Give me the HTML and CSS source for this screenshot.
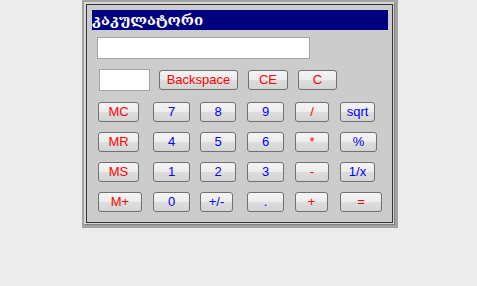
FILE: index.html
```html
<!DOCTYPE html>
<html>
<head>
	<meta charset="utf-8">
	<title>კაკულატორი</title>
	<link rel="stylesheet" href="styles.css">
</head>
<body>
<div class="frame">
<div class="shell">
<div class="panel">
	<div class="title">კაკულატორი</div>
	<input type="text" class="display" value="">
	<div class="tools">
		<input type="text" class="memory" value="">
		<button class="op w79">Backspace</button>
		<button class="op w40">CE</button>
		<button class="op w39">C</button>
	</div>
	<div class="keys">
		<button class="op w41">MC</button>
		<button class="num w37">7</button>
		<button class="num w36">8</button>
		<button class="num w37">9</button>
		<button class="op w34">/</button>
		<button class="num w35">sqrt</button>

		<button class="op w41">MR</button>
		<button class="num w37">4</button>
		<button class="num w36">5</button>
		<button class="num w37">6</button>
		<button class="op w34">*</button>
		<button class="num w37">%</button>

		<button class="op w41">MS</button>
		<button class="num w37">1</button>
		<button class="num w36">2</button>
		<button class="num w37">3</button>
		<button class="op w34">-</button>
		<button class="num w35">1/x</button>

		<button class="op w44">M+</button>
		<button class="num w37">0</button>
		<button class="num w33">+/-</button>
		<button class="num w37">.</button>
		<button class="op w33">+</button>
		<button class="op w42">=</button>
	</div>
</div>
</div>
</div>
</body>
</html>
```

FILE: styles.css
```css
body {
	margin: 0;
	background: #ececec;
	font-family: "Liberation Sans", Arial, sans-serif;
}

.frame {
	margin-left: 82px;
	width: 316px;
	box-sizing: border-box;
	background: #a3a3a3;
	padding: 2px 3px 3px 2px;
}

.shell {
	border: 1px solid;
	border-color: #d6d6d6 #808080 #808080 #d6d6d6;
	background: #d6d6d6;
	padding: 1px;
}

.panel {
	border: 1px solid #333;
	background: #cccccc;
	padding: 5px 3px 10px 5px;
}

.title {
	width: 296px;
	height: 20px;
	background: #000080;
	color: #fff;
	font: bold 15px/20px "DejaVu Serif", serif;
	white-space: nowrap;
}

.display {
	display: block;
	margin: 7px 0 0 5px;
	width: 213px;
	height: 22px;
	box-sizing: border-box;
	border: 1px solid #a5a5a5;
	background: #fff;
	padding: 0;
}

.tools {
	display: flex;
	align-items: center;
	gap: 9px;
	margin-top: 10px;
	padding-left: 7px;
	height: 22px;
}

.memory {
	width: 51px;
	height: 22px;
	box-sizing: border-box;
	border: 1px solid #a5a5a5;
	background: #fff;
	padding: 0;
}

.tools .w40, .tools .w39 {
	margin-left: 1px;
}

.keys {
	display: grid;
	grid-template-columns: 55px 47px 47px 48px 45px 1fr;
	grid-auto-rows: 20px;
	row-gap: 10px;
	justify-items: start;
	margin-top: 11px;
	padding-left: 6px;
}

button {
	height: 20px;
	box-sizing: border-box;
	padding: 0;
	border: 1px solid #707070;
	border-radius: 3px;
	background: linear-gradient(#f4f4f4 0, #ececec 50%, #dddddd 50%, #d4d4d4 100%);
	font: 13px/18px "Liberation Sans", Arial, sans-serif;
	text-align: center;
}

.op {
	color: #ff0000;
}

.num {
	color: #0000ff;
}

.w33 { width: 33px; }
.w34 { width: 34px; }
.w35 { width: 35px; }
.w36 { width: 36px; }
.w37 { width: 37px; }
.w39 { width: 39px; }
.w40 { width: 40px; }
.w41 { width: 41px; }
.w42 { width: 42px; }
.w44 { width: 44px; }
.w79 { width: 79px; }
```
